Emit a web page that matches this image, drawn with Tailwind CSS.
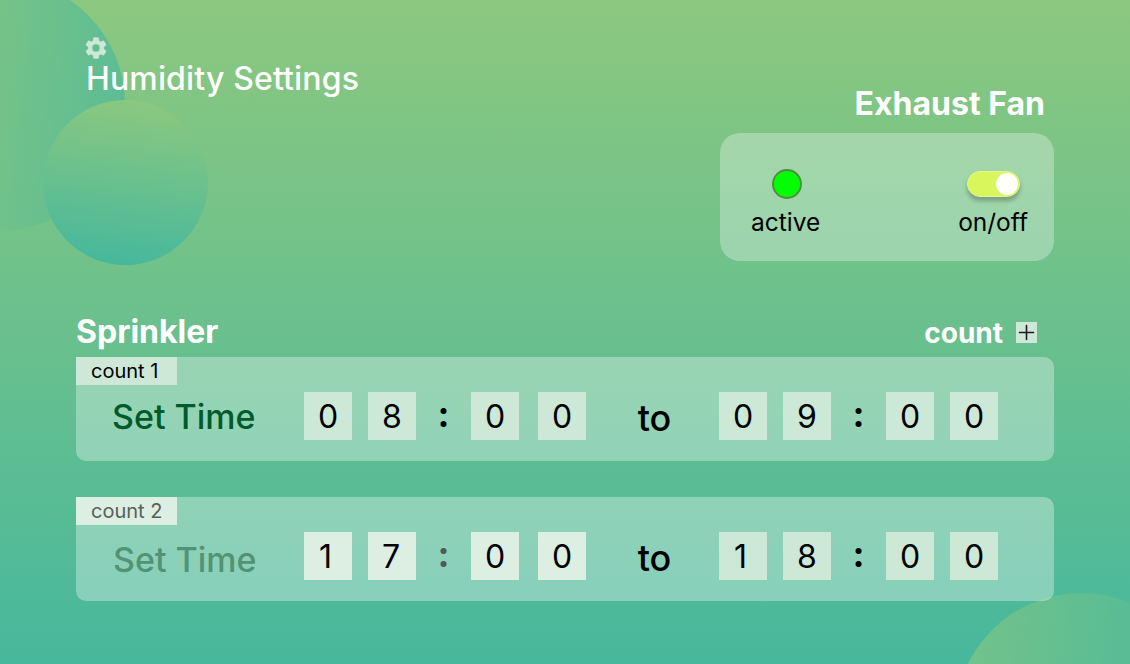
<!DOCTYPE html>
<html lang="en">
<head>
<meta charset="utf-8">
<title>Humidity Settings</title>
<script src="https://cdn.jsdelivr.net/npm/@tailwindcss/browser@4"></script>
</head>
<body class="font-['Inter',sans-serif] text-black">
<div class="relative isolate h-[664px] w-[1130px] overflow-hidden bg-linear-[180deg,#8cc87f,#47b89c] px-[76px]">
  <!-- background circles -->
  <div class="absolute -z-10 left-[-128px] top-[-22px] size-[253px] rounded-full bg-linear-[97deg,#8cc87f_10%,#74c289_50%,#58bc95]"></div>
  <div class="absolute -z-10 left-[43px] top-[99.5px] size-[165px] rounded-full bg-linear-[187deg,#8cc87f_4%,#47b89c_94%]"></div>
  <div class="absolute -z-10 left-[955px] top-[592.5px] size-[253px] rounded-full bg-linear-[97deg,#76c389,#47b89c]"></div>

  <header class="flex h-[133px] justify-between pl-[10px] pr-[9px]">
    <div class="pt-[38px]">
      <svg class="ml-[-3px] size-[26px] -mt-[3px] fill-[#cde8d6] stroke-[#cde8d6]" stroke-width=".3" viewBox="0 0 24 24"><path d="M19.14 12.94c.04-.3.06-.61.06-.94 0-.32-.02-.64-.07-.94l2.03-1.58a.49.49 0 0 0 .12-.61l-1.92-3.32a.488.488 0 0 0-.59-.22l-2.39.96c-.5-.38-1.03-.7-1.62-.94l-.36-2.54a.484.484 0 0 0-.48-.41h-3.84c-.24 0-.43.17-.47.41l-.36 2.54c-.59.24-1.13.57-1.62.94l-2.39-.96c-.22-.08-.47 0-.59.22L2.74 8.87c-.12.21-.08.47.12.61l2.03 1.58c-.05.3-.09.63-.09.94s.02.64.07.94l-2.03 1.58a.49.49 0 0 0-.12.61l1.92 3.32c.12.22.37.29.59.22l2.39-.96c.5.38 1.03.7 1.62.94l.36 2.54c.05.24.24.41.48.41h3.84c.24 0 .44-.17.47-.41l.36-2.54c.59-.24 1.13-.56 1.62-.94l2.39.96c.22.08.47 0 .59-.22l1.92-3.32c.12-.22.07-.47-.12-.61l-2.01-1.58zM12 15.6A3.6 3.6 0 1 1 12 8.4a3.6 3.6 0 0 1 0 7.2z"/></svg>
      <h1 class="-mt-[2px] text-[32px] leading-[39px] font-medium tracking-[0.14px] text-white">Humidity Settings</h1>
    </div>
    <h2 class="pt-[84px] text-[32px] leading-[39px] font-bold text-white">Exhaust Fan</h2>
  </header>

  <section class="ml-auto flex h-[128px] w-[334px] justify-between rounded-[20px] bg-white/30 pl-[31px] pr-[26px] pt-[36px] text-[24.5px] leading-[29px]">
    <div class="flex flex-col items-center gap-[9px]">
      <div class="ml-[3px] size-[30px] rounded-full border-2 border-[#4f8f3f] bg-[#00ff00]"></div>
      <span>active</span>
    </div>
    <div class="flex flex-col items-center gap-[11px] pt-[2px]">
      <div class="flex h-[26px] w-[53px] justify-end rounded-full border border-[#e2f78c] bg-[#d9f65c] p-px shadow-[0_4px_4px_rgba(0,0,0,0.25)]">
        <div class="size-[22px] rounded-full bg-white"></div>
      </div>
      <span>on/off</span>
    </div>
  </section>

  <div class="flex h-[96px] items-end justify-between pb-[6px] pr-[17px] text-white">
    <h2 class="text-[32px] leading-[39px] font-bold">Sprinkler</h2>
    <div class="flex items-center gap-[13px] pb-[1px]">
      <span class="text-[28px] leading-[34px] font-bold">count</span>
      <svg class="-mt-px size-[21px] bg-[#cde8d6]" viewBox="0 0 21 21" fill="none" stroke="#1d1b20" stroke-width="1.6" stroke-linecap="round"><path d="M10.5 3.5v14M3.5 10.5h14"/></svg>
    </div>
  </div>

  <section class="h-[104px] rounded-[10px] rounded-tl-none bg-white/33">
    <div class="h-[28px] w-[101px] bg-[#cde8d6] pl-[15px] text-xl leading-[28px]">count 1</div>
    <div class="flex h-[62px] items-center pl-[36px] text-[32px]">
      <span class="w-[192px] text-[34px] font-medium text-[#005b2b]">Set Time</span>
      <div class="flex leading-[50px]">
        <span class="h-[48px] w-[48px] text-center bg-[#cde8d6]">0</span>
        <span class="ml-[16px] h-[48px] w-[48px] text-center bg-[#cde8d6]">8</span>
        <span class="w-[55px] text-center text-[36px] font-bold leading-[45px]">:</span>
        <span class="h-[48px] w-[48px] text-center bg-[#cde8d6]">0</span>
        <span class="ml-[19px] h-[48px] w-[48px] text-center bg-[#cde8d6]">0</span>
      </div>
      <span class="w-[133px] pt-[4px] pl-[4px] text-center text-[36px] font-medium">to</span>
      <div class="flex leading-[50px]">
        <span class="h-[48px] w-[48px] text-center bg-[#cde8d6]">0</span>
        <span class="ml-[16px] h-[48px] w-[48px] text-center bg-[#cde8d6]">9</span>
        <span class="w-[55px] text-center text-[36px] font-bold leading-[45px]">:</span>
        <span class="h-[48px] w-[48px] text-center bg-[#cde8d6]">0</span>
        <span class="ml-[16px] h-[48px] w-[48px] text-center bg-[#cde8d6]">0</span>
      </div>
    </div>
  </section>

  <section class="mt-[36px] h-[104px] rounded-[10px] rounded-tl-none bg-white/33">
    <div class="h-[28px] w-[101px] bg-[#ddeee3] pl-[15px] text-xl leading-[28px] text-[#58605b]">count 2</div>
    <div class="flex h-[62px] items-center pl-[36px] text-[32px]">
      <span class="w-[192px] pl-[1px] pt-[6px] text-[34px] font-medium text-[#529373]">Set Time</span>
      <div class="flex leading-[50px]">
        <span class="h-[48px] w-[48px] pr-[5px] text-center bg-[#ddeee3]">1</span>
        <span class="ml-[16px] h-[48px] w-[48px] pr-[2px] text-center bg-[#ddeee3]">7</span>
        <span class="w-[55px] text-center text-[36px] font-bold leading-[45px] text-[#4d5a54]">:</span>
        <span class="h-[48px] w-[48px] text-center bg-[#ddeee3]">0</span>
        <span class="ml-[19px] h-[48px] w-[48px] text-center bg-[#ddeee3]">0</span>
      </div>
      <span class="w-[133px] pt-[4px] pl-[4px] text-center text-[36px] font-medium">to</span>
      <div class="flex leading-[50px]">
        <span class="h-[48px] w-[48px] pr-[5px] text-center bg-[#cde8d6]">1</span>
        <span class="ml-[16px] h-[48px] w-[48px] text-center bg-[#cde8d6]">8</span>
        <span class="w-[55px] text-center text-[36px] font-bold leading-[45px]">:</span>
        <span class="h-[48px] w-[48px] text-center bg-[#cde8d6]">0</span>
        <span class="ml-[16px] h-[48px] w-[48px] text-center bg-[#cde8d6]">0</span>
      </div>
    </div>
  </section>
</div>
</body>
</html>
